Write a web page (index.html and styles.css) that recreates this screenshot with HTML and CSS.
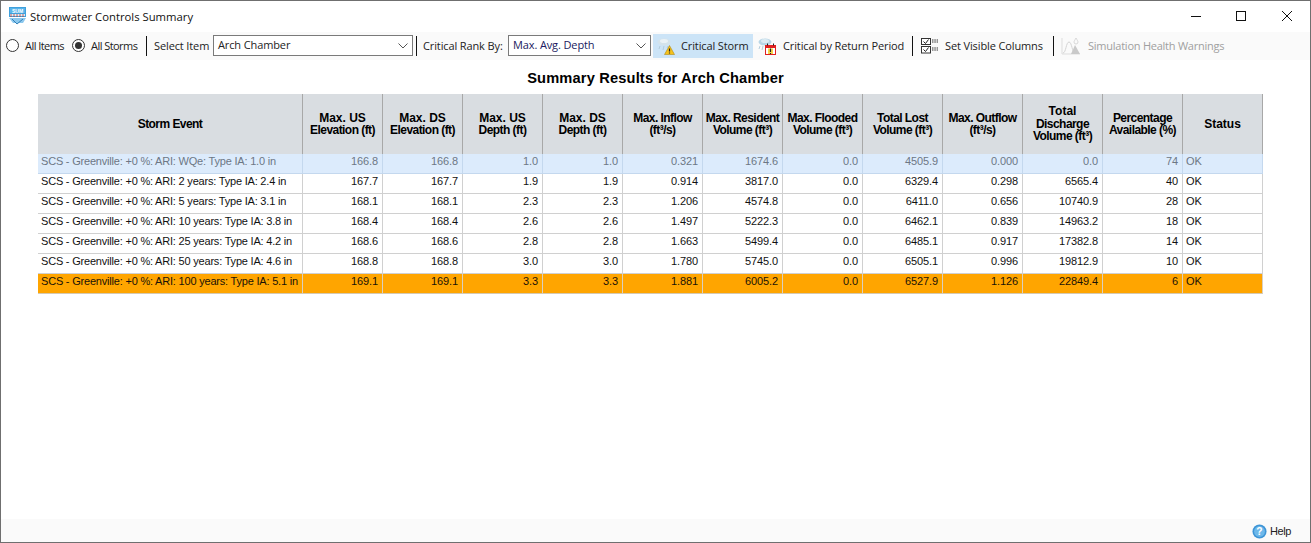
FILE: index.html
```html
<!DOCTYPE html>
<html lang="en">
<head>
<meta charset="utf-8">
<title>Stormwater Controls Summary</title>
<link rel="stylesheet" href="styles.css">
</head>
<body>
<div class="window">
  <header class="titlebar">
    <svg class="app-icon" width="17" height="18" viewBox="0 0 17 18"><rect x="0" y="0" width="17" height="10" fill="#3fa0dc"/><rect x="1" y="1" width="15" height="5" fill="#58b4ea"/><text x="8.5" y="5.6" class="app-icon-text" text-anchor="middle">SUM</text><path d="M1 7h15v2H1z" fill="#d8eefb"/><path d="M2 7v3M5 7v3M8 7v3M11 7v3M14 7v3" stroke="#c0392b" stroke-width=".8"/><path d="M0 11h17l-3 5H4z" fill="#8cc8ee"/><path d="M3 12l5 5 6-5" stroke="#2f7fb8" fill="none"/></svg>
    <span class="title">Stormwater Controls Summary</span>
    <div class="win-controls">
      <svg width="12" height="12" viewBox="0 0 12 12" class="w-min"><path d="M1 6.500h10" stroke="#111"/></svg>
      <svg width="12" height="12" viewBox="0 0 12 12" class="w-max"><rect x="1.500" y="1.500" width="9" height="9" fill="none" stroke="#111"/></svg>
      <svg width="12" height="12" viewBox="0 0 12 12" class="w-close"><path d="M1 1l10 10M11 1L1 11" stroke="#111"/></svg>
    </div>
  </header>

  <nav class="toolbar">
    <span class="radio"></span><span class="lbl l-items">All Items</span>
    <span class="radio on"></span><span class="lbl l-storms">All Storms</span>
    <span class="sep"></span>
    <span class="lbl l-select">Select Item</span>
    <div class="combo c-item"><span>Arch Chamber</span><svg width="10" height="6" viewBox="0 0 10 6"><path d="M.5.500L5 5l4.500-4.500" fill="none" stroke="#555"/></svg></div>
    <span class="sep s-a"></span>
    <span class="lbl l-rank">Critical Rank By:</span>
    <div class="combo c-rank"><span class="navy">Max. Avg. Depth</span><svg width="10" height="6" viewBox="0 0 10 6"><path d="M.5.500L5 5l4.500-4.500" fill="none" stroke="#555"/></svg></div>
    <button class="tool active">
      <svg width="18" height="18" viewBox="0 0 18 18"><ellipse cx="7" cy="5" rx="6.500" ry="3.500" fill="#d4e3ec"/><ellipse cx="7" cy="4" rx="4" ry="2" fill="#eaf2f7"/><path d="M3 9l-1 3M7 9l-1 4M11 9l-1 2" stroke="#b4cddd"/><path d="M12.500 8.500l5 9h-10z" fill="#f6c21c" stroke="#a57a00" stroke-width=".5"/><path d="M12.500 11.500v3M12.500 15.500v1" stroke="#222" stroke-width="1.200"/></svg>
      <span>Critical Storm</span>
    </button>
    <button class="tool t-return">
      <svg width="18" height="18" viewBox="0 0 18 18"><ellipse cx="7" cy="5" rx="6.500" ry="3.500" fill="#b9d6e6"/><ellipse cx="7" cy="4" rx="4" ry="2" fill="#dcebf3"/><path d="M2 9l-1 3M5 9l-1 4" stroke="#b4cddd"/><rect x="7.500" y="8.500" width="10" height="9" fill="#fff" stroke="#e02020"/><rect x="7" y="8" width="11" height="3" fill="#e02020"/><path d="M9.500 6.500v2M15.500 6.500v2" stroke="#222"/><path d="M10 11.500h5v5.500h-5z" fill="#f9d64a"/><path d="M12.500 11.500v3.500M12.500 16v1" stroke="#222" stroke-width="1.200"/></svg>
      <span>Critical by Return Period</span>
    </button>
    <span class="sep s-b"></span>
    <button class="tool t-cols">
      <svg width="18" height="18" viewBox="0 0 18 18"><rect x=".5" y="1.500" width="9" height="6" fill="#fff" stroke="#333"/><rect x=".5" y="9.500" width="9" height="6.500" fill="#fff" stroke="#333"/><path d="M2.500 4.500l2 2 3-4M2.500 12.500l2 2 3-4" fill="none" stroke="#222"/><path d="M11 3h6M11 5h6M11 11h6M11 13h6" stroke="#333" stroke-dasharray="1.500 .8"/></svg>
      <span>Set Visible Columns</span>
    </button>
    <span class="sep s-c"></span>
    <button class="tool t-health">
      <svg width="20" height="18" viewBox="0 0 20 18"><path d="M1 1v16h18" fill="none" stroke="#ddd"/><path d="M2 16c3 0 3-11 6-11s3 11 6 11" fill="none" stroke="#d4d4d4"/><path d="M14 8l5 9h-9z" fill="#c9c9c9"/><path d="M15 1c1 2 2 3 2 4a2 2 0 0 1-4 0c0-1 1-2 2-4z" fill="none" stroke="#d8d8d8"/></svg>
      <span>Simulation Health Warnings</span>
    </button>
  </nav>

  <main class="content">
    <h1>Summary Results for Arch Chamber</h1>
    <table>
      <colgroup><col class="col-event"><col span="12" class="col-num"></colgroup>
      <thead>
        <tr>
          <th><small>Storm Event</small></th>
          <th>Max. US<br><small>Elevation (ft)</small></th>
          <th>Max. DS<br><small>Elevation (ft)</small></th>
          <th>Max. US<br><small>Depth (ft)</small></th>
          <th>Max. DS<br><small>Depth (ft)</small></th>
          <th><small>Max. Inflow<br>(ft³/s)</small></th>
          <th><small>Max. Resident<br>Volume (ft³)</small></th>
          <th><small>Max. Flooded<br>Volume (ft³)</small></th>
          <th><small>Total Lost<br>Volume (ft³)</small></th>
          <th><small>Max. Outflow<br>(ft³/s)</small></th>
          <th>Total<br><small>Discharge<br>Volume (ft³)</small></th>
          <th><small>Percentage<br>Available (%)</small></th>
          <th>Status</th>
        </tr>
      </thead>
      <tbody>
        <tr class="selected"><td>SCS - Greenville: +0 %: ARI: WQe: Type IA: 1.0 in</td><td>166.8</td><td>166.8</td><td>1.0</td><td>1.0</td><td>0.321</td><td>1674.6</td><td>0.0</td><td>4505.9</td><td>0.000</td><td>0.0</td><td>74</td><td>OK</td></tr>
        <tr><td>SCS - Greenville: +0 %: ARI: 2 years: Type IA: 2.4 in</td><td>167.7</td><td>167.7</td><td>1.9</td><td>1.9</td><td>0.914</td><td>3817.0</td><td>0.0</td><td>6329.4</td><td>0.298</td><td>6565.4</td><td>40</td><td>OK</td></tr>
        <tr><td>SCS - Greenville: +0 %: ARI: 5 years: Type IA: 3.1 in</td><td>168.1</td><td>168.1</td><td>2.3</td><td>2.3</td><td>1.206</td><td>4574.8</td><td>0.0</td><td>6411.0</td><td>0.656</td><td>10740.9</td><td>28</td><td>OK</td></tr>
        <tr><td>SCS - Greenville: +0 %: ARI: 10 years: Type IA: 3.8 in</td><td>168.4</td><td>168.4</td><td>2.6</td><td>2.6</td><td>1.497</td><td>5222.3</td><td>0.0</td><td>6462.1</td><td>0.839</td><td>14963.2</td><td>18</td><td>OK</td></tr>
        <tr><td>SCS - Greenville: +0 %: ARI: 25 years: Type IA: 4.2 in</td><td>168.6</td><td>168.6</td><td>2.8</td><td>2.8</td><td>1.663</td><td>5499.4</td><td>0.0</td><td>6485.1</td><td>0.917</td><td>17382.8</td><td>14</td><td>OK</td></tr>
        <tr><td>SCS - Greenville: +0 %: ARI: 50 years: Type IA: 4.6 in</td><td>168.8</td><td>168.8</td><td>3.0</td><td>3.0</td><td>1.780</td><td>5745.0</td><td>0.0</td><td>6505.1</td><td>0.996</td><td>19812.9</td><td>10</td><td>OK</td></tr>
        <tr class="critical"><td>SCS - Greenville: +0 %: ARI: 100 years: Type IA: 5.1 in</td><td>169.1</td><td>169.1</td><td>3.3</td><td>3.3</td><td>1.881</td><td>6005.2</td><td>0.0</td><td>6527.9</td><td>1.126</td><td>22849.4</td><td>6</td><td>OK</td></tr>
      </tbody>
    </table>
  </main>

  <footer class="statusbar">
    <svg width="15" height="15" viewBox="0 0 16 16"><circle cx="8" cy="8" r="7.500" fill="#3d94d6"/><circle cx="8" cy="8" r="5.800" fill="#6db8ea"/><text x="8" y="12" class="help-q" text-anchor="middle">?</text></svg>
    <span class="help-text">Help</span>
  </footer>
</div>
</body>
</html>
```
FILE: styles.css
```css
* { box-sizing: border-box; }
html, body { margin: 0; height: 100%; background: #fff; overflow: hidden; }
body { font-family: "Liberation Sans", Arial, sans-serif; font-size: 11px; color: #000; }

.window {
  height: 543px;
  display: flex;
  flex-direction: column;
  border: 1px solid #6f6f6f;
  background: #fff;
}

.titlebar {
  height: 31px;
  flex: none;
  display: flex;
  align-items: center;
  padding-left: 8px;
}
.app-icon { margin-right: 4px; margin-top: -1px; }
.app-icon-text { font: bold 5px "Liberation Sans", sans-serif; fill: #fff; }
.title { font-family: "Open Sans", sans-serif; font-size: 11.3px; color: #111; margin-top: -1px; }
.win-controls { margin-left: auto; display: flex; align-items: center; margin-top: -2px; }
.w-min { margin-right: 33px; }
.w-max { margin-right: 34px; }
.w-close { margin-right: 17px; }

.toolbar {
  height: 28px;
  flex: none;
  display: flex;
  align-items: center;
  background: #fafafa;
  padding: 0 0 1px 5px;
  font-family: "Open Sans", sans-serif;
  font-size: 11px;
  letter-spacing: -.12px;
  color: #222;
}
.lbl { white-space: nowrap; flex: none; }
.radio {
  width: 13px; height: 13px;
  border: 1px solid #333;
  border-radius: 50%;
  background: #fff;
  margin-right: 6px;
  flex: none;
}
.radio.on::after {
  content: "";
  display: block;
  width: 7px; height: 7px;
  margin: 2px;
  border-radius: 50%;
  background: #333;
}
.l-items { width: 47px; letter-spacing: -.55px; }
.l-storms { width: 55px; letter-spacing: -.55px; }
.l-select { width: 59px; }
.l-rank { width: 85px; }
.sep { width: 1px; height: 20px; background: #111; margin-right: 7px; flex: none; }
.s-a { margin-left: 3px; margin-right: 6px; }
.s-b { margin-right: 8px; }
.combo {
  height: 21px;
  border: 1px solid #7a7a7a;
  background: #fff;
  display: flex;
  align-items: center;
  justify-content: space-between;
  padding: 0 4px 2px 4px;
  flex: none;
}
.combo svg { margin-top: 2px; }
.c-item { width: 200px; }
.c-rank { width: 143px; }
.navy { color: #201a60; }
.tool {
  height: 24px;
  border: 0;
  background: transparent;
  display: flex;
  align-items: center;
  padding: 0;
  font: inherit;
  letter-spacing: inherit;
  color: inherit;
  white-space: nowrap;
  flex: none;
}
.tool.active { background: #cce4f7; margin-left: 2px; width: 100px; padding-left: 4px; gap: 6px; }
.t-return { width: 159px; padding-left: 5px; gap: 7px; }
.t-cols { width: 132px; gap: 6px; }
.t-health { color: #a0a0a0; gap: 7px; letter-spacing: -.24px; }

.content { flex: 1; padding: 0 0 0 37px; min-height: 0; }
h1 {
  margin: 0;
  height: 34px;
  padding-top: 9px;
  text-align: center;
  font-size: 14.67px;
  line-height: 18px;
  font-weight: bold;
  width: 1235px;
  letter-spacing: .15px;
}
table {
  table-layout: fixed;
  width: 1225px;
  border-collapse: separate;
  border-spacing: 0;
}
.col-event { width: 265px; }
.col-num { width: 80px; }
th {
  height: 60px;
  background: #d9dde1;
  border-right: 1px solid #a8a8a8;
  padding: 0;
  text-align: center;
  font-size: 12px;
  line-height: 12.5px;
  font-weight: bold;
  vertical-align: middle;
}
th small { font-size: 12px; letter-spacing: -.55px; }
td {
  height: 20px;
  padding: 1px 4px 0 3px;
  vertical-align: top;
  border-right: 1px solid #d0d0d0;
  border-bottom: 1px solid #d0d0d0;
  text-align: right;
  white-space: nowrap;
  letter-spacing: -.1px;
  color: #111;
}
td:first-child { letter-spacing: -.2px; }
td:first-child, td:last-child { text-align: left; }
.selected td { background: #dcebfc; color: #6d7785; border-color: #c4d8ee; }
.critical td { background: #ffa500; color: #1a1206; border-right-color: #d9cfc0; border-bottom-color: #d6c9b0; }

.statusbar {
  height: 23px;
  flex: none;
  background: #fafafa;
  display: flex;
  align-items: center;
  justify-content: flex-end;
  gap: 3px;
  padding: 1px 19px 0 0;
  font-size: 11px;
  color: #222;
}
.help-text { letter-spacing: -.4px; }
.help-q { font: bold 11px "Liberation Sans", sans-serif; fill: #fff; }
```
